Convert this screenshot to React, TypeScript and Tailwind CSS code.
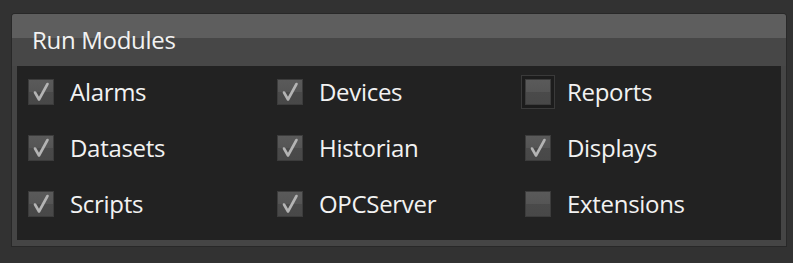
const modules = [
  { label: 'Alarms', checked: true },
  { label: 'Devices', checked: true },
  { label: 'Reports', checked: false, focused: true },
  { label: 'Datasets', checked: true },
  { label: 'Historian', checked: true },
  { label: 'Displays', checked: true },
  { label: 'Scripts', checked: true },
  { label: 'OPCServer', checked: true },
  { label: 'Extensions', checked: false },
]

function Box({ checked, focused }: { checked: boolean; focused?: boolean }) {
  return (
    <div
      className={
        'w-[26px] h-[26px] shrink-0 border border-[#3c3c3c] bg-[linear-gradient(to_bottom,#5a5a5a_0,#555_50%,#4a4a4a_50%,#484848_100%)] flex items-center justify-center ' +
        (focused ? 'outline-[3px] outline-solid outline-[#1c1c1c] shadow-[0_0_0_4px_#3a3a3a]' : '')
      }
    >
      {checked && (
        <svg width="22" height="22" viewBox="0 0 22 22" fill="none">
          <path
            d="M5 11.5 L9 18.5 L17.5 3"
            stroke="#b4b4b4"
            strokeWidth="2.6"
            strokeLinecap="round"
            strokeLinejoin="round"
          />
        </svg>
      )}
    </div>
  )
}

export default function App() {
  return (
    <div className="w-[793px] h-[263px] bg-[#323232] pt-[14px] pl-[12px] font-['Open_Sans',sans-serif]">
      <div className="w-[774px] h-[232px] bg-[#454545] rounded-t-[3px] shadow-[0_0_0_1px_#282828] flex flex-col">
        <div className="h-[52px] rounded-t-[3px] bg-[linear-gradient(to_bottom,#5e5e5e_0,#5e5e5e_24px,#474747_24px)] pl-[20px] flex items-center text-[24px] text-[#f2f2f2] tracking-[-0.3px]">
          Run Modules
        </div>
        <div className="mx-[5px] h-[174px] bg-[#222222] pl-[11px] pt-[13px] grid grid-cols-[249px_248px_1fr] gap-y-[30px] content-start">
          {modules.map((m) => (
            <div key={m.label} className="flex items-center gap-[16px] h-[26px]">
              <Box checked={m.checked} focused={m.focused} />
              <span className="text-[24px] text-[#f2f2f2] tracking-[-0.3px] leading-none">{m.label}</span>
            </div>
          ))}
        </div>
      </div>
    </div>
  )
}
